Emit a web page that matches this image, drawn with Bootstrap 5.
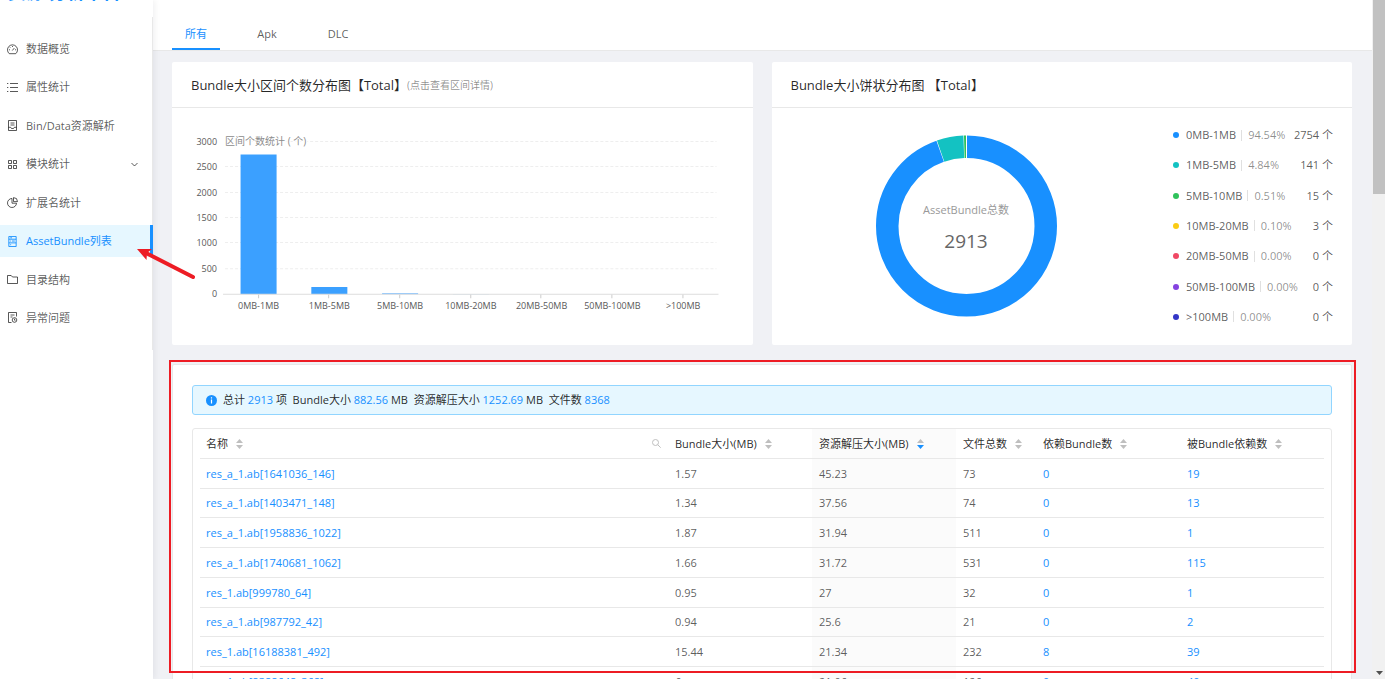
<!DOCTYPE html>
<html lang="zh-CN">
<head>
<meta charset="utf-8">
<meta name="viewport" content="width=device-width, initial-scale=1">
<title>AssetBundle列表</title>
<link href="https://cdn.jsdelivr.net/npm/bootstrap@5.3.0/dist/css/bootstrap.min.css" rel="stylesheet">
<style>
:root{--blue:#1890ff;--line:#e8e8e8;--ink:rgba(0,0,0,.85);--text:rgba(0,0,0,.65);--muted:rgba(0,0,0,.45)}
body{font-family:"Open Sans","Noto Sans CJK SC",sans-serif;font-size:11px;line-height:18px;color:var(--text);background:#f0f1f5}
a{color:var(--blue);text-decoration:none}
svg{display:block;flex:none}
.ico{width:11px;height:11px;fill:none;stroke:currentColor}
.side{width:153px;z-index:2;box-shadow:2px 0 6px rgba(0,21,41,.06)}
.brand{height:17px}
.brand a{font-size:18px;line-height:24px;font-weight:700;margin-top:-20px}
.side-menu{height:333px;border-right:1px solid var(--line)}
.side-menu a{height:32px;padding-left:7px;gap:8px;color:var(--text)}
.side-menu a.active{background:#e6f7ff;color:var(--blue);border-right:3px solid var(--blue);margin-right:-1px}
.chevron{margin-left:auto;margin-right:14px}
.pointer{position:absolute;left:136px;top:21px;z-index:5}
.tabs{height:51px;padding-left:19px;border-bottom:1px solid var(--line);gap:23px}
.tabs button{height:32px;width:48px;border:0;background:none;color:var(--text);padding:2px 0 0;border-bottom:2px solid transparent}
.tabs button.active{color:var(--blue);border-color:var(--blue)}
.content-area{padding:11px 20px 0 19px}
.panels{gap:19px}
.panel{background:#fff;border-radius:2px}
.panel-head{height:46px;padding:0 19px;border-bottom:1px solid var(--line)}
.panel-head h2{font-size:13px;line-height:20px;font-weight:400;color:var(--ink);margin:0}
.hint{font-size:10px;color:var(--muted)}
.chart-body{height:237px}
.legend{width:160px;height:200px;right:19px;top:18px}
.dot{width:6px;height:6px;border-radius:50%;margin-right:7px}
.pct{color:var(--muted)}
.rule{width:1px;height:11px;background:#e0e0e0;margin:0 6px 0 5px}
.list-panel{margin-top:19px;border:1px solid var(--line);padding:20px 19px 0}
.mark-box{position:absolute;left:-4px;right:-5px;top:-5px;height:313px;border:2px solid #ed1c24;pointer-events:none}
.total{height:30px;border:1px solid #91d5ff;background:#e6f7ff;border-radius:3px;padding:0 13px;color:var(--ink);gap:6px}
.table-box{margin-top:13px;border:1px solid var(--line);border-radius:3px;padding:0 7px}
.bundles{width:100%;table-layout:fixed;border-collapse:separate;border-spacing:0}
.bundles th,.bundles td{height:30px;padding:0 7px;border-bottom:1px solid var(--line);white-space:nowrap}
.bundles th:first-child,.bundles td:first-child{padding-left:6px}
.bundles tr:nth-child(4n+2) td{height:29px}
.bundles th{font-weight:400;color:var(--ink)}
.bundles .sorted{background:#fbfbfb}
.sort{border:0;padding:0;background:none;margin-left:8px;color:#bfbfbf}
.bar-track{width:13px;background:#f1f1f1}
.bar-thumb{height:194px;background:#c1c1c1;margin-left:1px}
</style>
</head>
<body>
<div class="d-flex vh-100 overflow-hidden">
  <aside class="side bg-white flex-shrink-0 position-relative">
    <div class="brand overflow-hidden d-flex"><a href="#" class="ps-1 ms-1 text-nowrap">资源 分析平台</a></div>
    <nav class="side-menu d-flex flex-column justify-content-between py-3" aria-label="主菜单">
      <a href="#" class="d-flex align-items-center"><svg class="ico" viewBox="0 0 11 11"><path d="M2.3 9.700a5 5 0 1 1 6.400 0zM5.300 6.500l2-2.400M5.500 2v1M2 5.800h1M8 5.800h1M3 3.300l.6.6"/></svg>数据概览</a>
      <a href="#" class="d-flex align-items-center"><svg class="ico" viewBox="0 0 11 11"><path d="M3 1.500h8M3 5.500h8M3 9.500h8M0 1.500h1.300M0 5.500h1.300M0 9.500h1.300"/></svg>属性统计</a>
      <a href="#" class="d-flex align-items-center"><svg class="ico" viewBox="0 0 11 11"><path d="M1.500.5h8v10h-8zM3.500 3h4M3.500 5h4M1.500 7.300h2.200l.8 1.200h2l.8-1.200h2.200"/></svg>Bin/Data资源解析</a>
      <a href="#" class="d-flex align-items-center"><svg class="ico" viewBox="0 0 11 11"><path d="M1.500 1.500h3v3h-3zM6.500 1.500h3v3h-3zM1.500 6.500h3v3h-3zM6.500 6.500h3v3h-3z"/></svg>模块统计<svg class="chevron" width="7" height="5" viewBox="0 0 7 5" fill="none" stroke="currentColor"><path d="M.5 1l3 3 3-3"/></svg></a>
      <a href="#" class="d-flex align-items-center"><svg class="ico" viewBox="0 0 11 11"><path d="M5 1.500a4.500 4.500 0 1 0 4.500 4.700H5zM6.500.6v4h4a4 4 0 0 0-4-4z"/></svg>扩展名统计</a>
      <a href="#" class="active d-flex align-items-center position-relative"><svg class="ico" viewBox="0 0 11 12"><path d="M1.500.5h8v11h-8zM1.500 3.500h8M1.500 7.500h8M3 5.500h1M5 5.500h3M3 2h2M3 9.500h1"/></svg>AssetBundle列表
        <svg class="pointer" width="60" height="34" viewBox="0 0 60 34" aria-hidden="true"><path d="M11 7.500L57 31" stroke="#ed1c24" stroke-width="4" stroke-linecap="round"/><path d="M1 3h15l-5 4-.500 7z" fill="#ed1c24"/></svg></a>
      <a href="#" class="d-flex align-items-center"><svg class="ico" viewBox="0 0 11 11"><path d="M.5 1.500h3.700l1.300 1.500h5v6.500H.5z"/></svg>目录结构</a>
      <a href="#" class="d-flex align-items-center"><svg class="ico" viewBox="0 0 11 11"><path d="M4.500 10.500h-3V.5h8v4M3.500 3h4M3.500 5h2"/><circle cx="7.500" cy="8" r="2.300"/><path d="M7.500 6.700v1.500h1"/></svg>异常问题</a>
    </nav>
  </aside>
  <main class="flex-grow-1 overflow-hidden">
    <div class="tabs bg-white d-flex align-items-end" role="tablist">
      <button class="active" role="tab" aria-selected="true">所有</button><button role="tab">Apk</button><button role="tab">DLC</button>
    </div>
    <div class="content-area">
      <div class="panels d-flex">
        <section class="panel w-50">
          <div class="panel-head d-flex align-items-center"><h2>Bundle大小区间个数分布图【Total】</h2><span class="hint">(点击查看区间详情)</span></div>
          <div class="chart-body">
            <svg id="bars" width="100%" viewBox="0 0 580 237" role="img" aria-label="区间个数统计" font-size="9" fill="#595959"></svg>
          </div>
        </section>
        <section class="panel w-50">
          <div class="panel-head d-flex align-items-center"><h2>Bundle大小饼状分布图 【Total】</h2></div>
          <div class="chart-body position-relative">
            <svg width="390" height="237" viewBox="0 0 390 237" role="img" aria-label="AssetBundle总数 2913">
              <g id="ring" fill="none" stroke-width="22.500"></g>
              <text x="194" y="106" text-anchor="middle" font-size="11" fill="#999">AssetBundle总数</text>
              <text x="194" y="140" text-anchor="middle" font-size="19" fill="#666">2913</text>
            </svg>
            <ul id="legend" class="legend position-absolute list-unstyled m-0 d-flex flex-column justify-content-between"></ul>
          </div>
        </section>
      </div>
      <section class="panel list-panel position-relative">
        <div class="mark-box"></div>
        <div class="total d-flex align-items-center"><svg width="11" height="11" viewBox="0 0 11 11"><circle cx="5.500" cy="5.500" r="5.500" fill="#1890ff"/><path d="M5.500 4.500V8.500M5.500 2.300v1.300" stroke="#fff" stroke-width="1.200"/></svg>
          <span>总计 <a href="#">2913</a> 项&nbsp; Bundle大小 <a href="#">882.56</a> MB&nbsp; 资源解压大小 <a href="#">1252.69</a> MB&nbsp; 文件数 <a href="#">8368</a></span></div>
        <div class="table-box">
          <table class="bundles">
            <colgroup><col><col style="width:144px"><col style="width:144px"><col style="width:80px"><col style="width:144px"><col style="width:144px"></colgroup>
            <thead><tr id="heads"></tr></thead>
            <tbody id="rows"></tbody>
          </table>
        </div>
      </section>
    </div>
  </main>
  <div class="bar-track flex-shrink-0 d-flex flex-column justify-content-between" aria-hidden="true">
    <div class="bar-thumb"></div>
    <svg class="ms-1 mb-1" width="7" height="4" viewBox="0 0 7 4"><path d="M0 0h7L3.500 4z" fill="#505050"/></svg>
  </div>
</div>
<script src="https://cdn.jsdelivr.net/npm/bootstrap@5.3.0/dist/js/bootstrap.bundle.min.js"></script>
<script>
const bins=[["0MB-1MB","94.54%",2754,"#1890ff"],["1MB-5MB","4.84%",141,"#13c2c2"],["5MB-10MB","0.51%",15,"#2fc25b"],["10MB-20MB","0.10%",3,"#facc14"],["20MB-50MB","0.00%",0,"#f04864"],["50MB-100MB","0.00%",0,"#8543e0"],[">100MB","0.00%",0,"#3436c7"]];
let s='';
for(let v=0;v<=3000;v+=500){const y=Math.round(186-v*152/3000);
  s+=`<text x="45" y="${y+3}" text-anchor="end">${v}</text>`;
  if(v)s+=`<path d="M53 ${y-.5}H544" stroke="#eee" stroke-dasharray="3 2"/>`;}
s+='<text x="53" y="37" font-size="10" fill="#8c8c8c" stroke="#fff" stroke-width="3" paint-order="stroke">区间个数统计 ( 个)</text>';
bins.forEach((b,i)=>{const x=86.5+i*70.7,h=b[2]*152/3000;
  s+=`<rect x="${x-18}" y="${186-h}" width="36" height="${h}" fill="#3ba0ff"/><path d="M${Math.round(x)-.5} 186v4" stroke="#ccc"/><text x="${x}" y="201" text-anchor="middle">${b[0].replace('>','&gt;')}</text>`;});
s+='<path d="M51 186H546" stroke="#ddd"/>';
bars.innerHTML=s;
const R=79.25,C=2*Math.PI*R;let a=0;
ring.innerHTML=bins.filter(b=>b[2]>0).map(b=>{const l=b[2]/2913*C,o=l>1?`<circle cx="194.500" cy="118" r="${R}" stroke="${b[3]}" stroke-dasharray="${l-.5} ${C}" stroke-dashoffset="${-a}" transform="rotate(-90 194.500 118)"/>`:'';a+=l;return o}).join('')+'<path d="M194.500 27v24" stroke="#fff" stroke-width="1"/>';
legend.innerHTML=bins.map(b=>`<li class="d-flex align-items-center"><span class="dot" style="background:${b[3]}"></span><span>${b[0].replace('>','&gt;')}</span><span class="rule"></span><span class="pct">${b[1]}</span><span class="ms-auto">${b[2]} 个</span></li>`).join('');
heads.innerHTML=["名称","Bundle大小(MB)","资源解压大小(MB)","文件总数","依赖Bundle数","被Bundle依赖数"].map((t,i)=>`<th class="${i==2?'sorted':''}"><div class="d-flex align-items-center">${t}<button class="sort" aria-label="排序"><svg width="7" height="10" viewBox="0 0 7 10" fill="currentColor"><path d="M0 4L3.500 0 7 4z"/><path d="M0 6h7L3.500 10z"${i==2?' fill="#1890ff"':''}/></svg></button>${i?'':'<button class="sort ms-auto" aria-label="搜索"><svg width="9" height="9" viewBox="0 0 9 9" fill="none" stroke="currentColor"><circle cx="3.500" cy="3.500" r="3"/><path d="M5.700 5.700L8.700 8.700"/></svg></button>'}</div></th>`).join('');
rows.innerHTML=[["res_a_1.ab[1641036_146]","1.57","45.23",73,0,19],["res_a_1.ab[1403471_148]","1.34","37.56",74,0,13],["res_a_1.ab[1958836_1022]","1.87","31.94",511,0,1],["res_a_1.ab[1740681_1062]","1.66","31.72",531,0,115],["res_1.ab[999780_64]","0.95","27",32,0,1],["res_a_1.ab[987792_42]","0.94","25.6",21,0,2],["res_1.ab[16188381_492]","15.44","21.34",232,8,39],["res_1.ab[8388648_368]","6","21.06",126,0,40]].map(r=>'<tr>'+r.map((c,i)=>`<td class="${i==2?'sorted':''}">${i==0||i>3?`<a href="#">${c}</a>`:c}</td>`).join('')+'</tr>').join('');
</script>
</body>
</html>
